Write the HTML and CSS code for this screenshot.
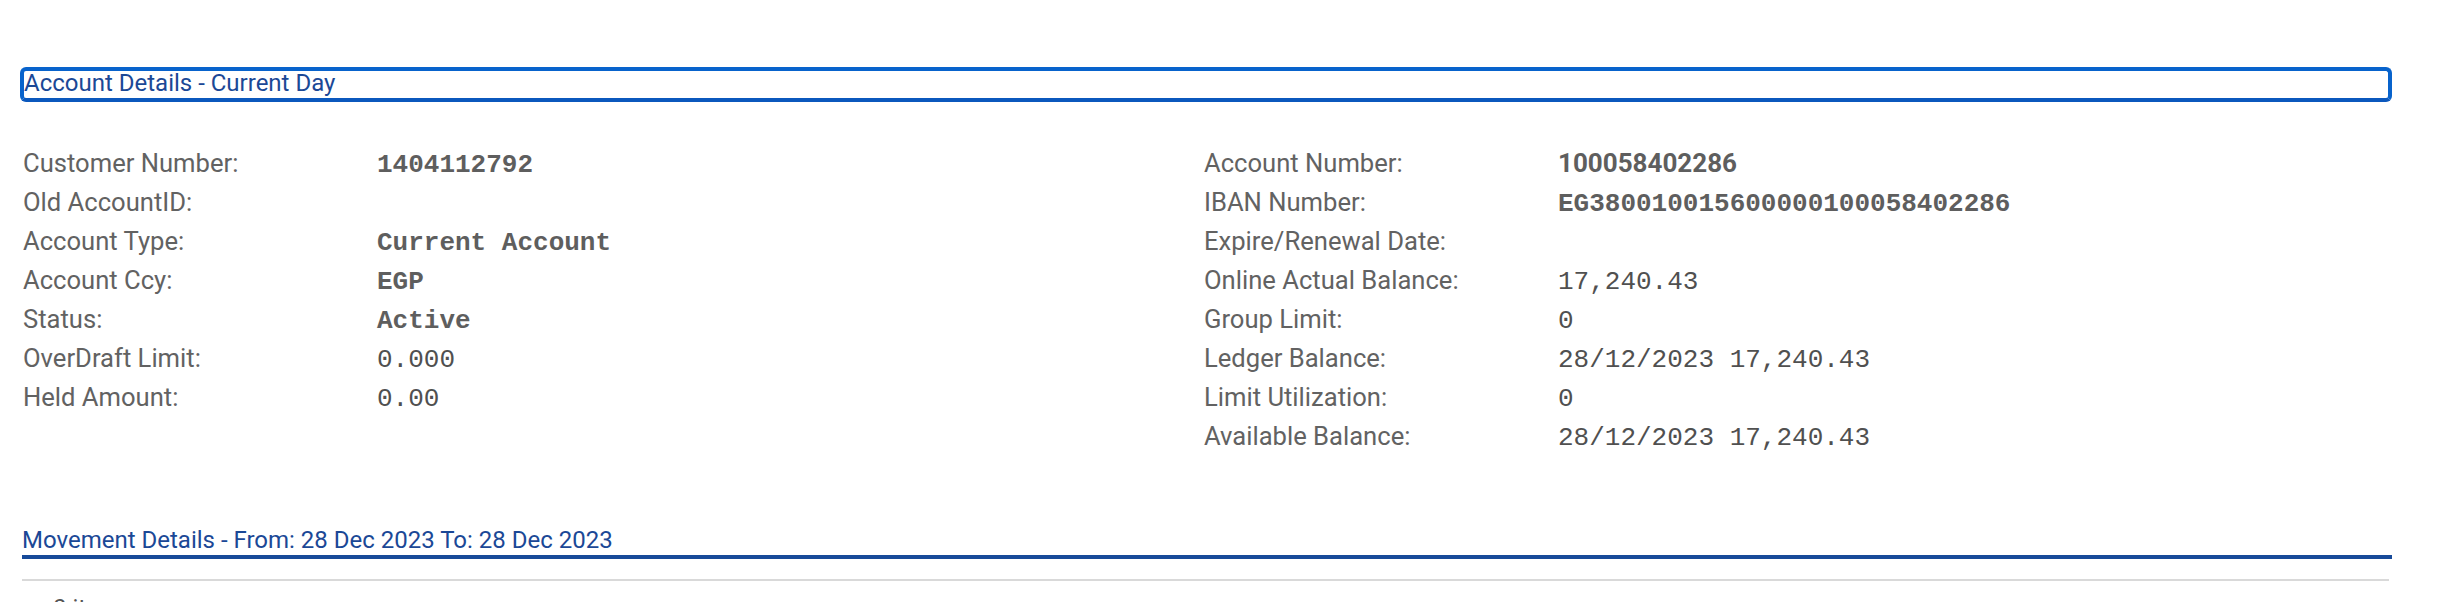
FILE: index.html
```html
<!DOCTYPE html>
<html>
<head>
<meta charset="utf-8">
<link rel="stylesheet" href="styles.css">
</head>
<body>
<div class="page">
  <div class="section-box">Account Details - Current Day</div>

  <div class="details">
    <div class="col">
      <div class="label">Customer Number:</div><div class="val courier">1404112792</div>
      <div class="label">Old AccountID:</div><div class="val"></div>
      <div class="label">Account Type:</div><div class="val courier">Current Account</div>
      <div class="label">Account Ccy:</div><div class="val courier">EGP</div>
      <div class="label">Status:</div><div class="val courier">Active</div>
      <div class="label">OverDraft Limit:</div><div class="val mono">0.000</div>
      <div class="label">Held Amount:</div><div class="val mono">0.00</div>
    </div>
    <div class="col">
      <div class="label">Account Number:</div><div class="val sansbold">100058402286</div>
      <div class="label">IBAN Number:</div><div class="val courier">EG380010015600000100058402286</div>
      <div class="label">Expire/Renewal Date:</div><div class="val"></div>
      <div class="label">Online Actual Balance:</div><div class="val mono">17,240.43</div>
      <div class="label">Group Limit:</div><div class="val mono">0</div>
      <div class="label">Ledger Balance:</div><div class="val mono">28/12/2023 17,240.43</div>
      <div class="label">Limit Utilization:</div><div class="val mono">0</div>
      <div class="label">Available Balance:</div><div class="val mono">28/12/2023 17,240.43</div>
    </div>
  </div>

  <div class="movement-title">Movement Details - From: 28 Dec 2023 To: 28 Dec 2023</div>
  <div class="grid-top"></div>
  <div class="items">0 items</div>
</div>
</body>
</html>
```
FILE: styles.css
```css
html, body {
  margin: 0;
  padding: 0;
  background: #ffffff;
}
body {
  font-family: Roboto, "Liberation Sans", Arial, sans-serif;
  color: #646464;
}
.page {
  padding: 67px 62px 0 20px;
}
.section-box {
  box-sizing: border-box;
  height: 35px;
  border: 4px solid #0863cc;
  border-bottom-color: #0b58bd;
  border-radius: 6px;
  color: #1b4896;
  font-size: 24px;
  line-height: 24px;
  padding: 0;
  white-space: nowrap;
}
.details {
  display: grid;
  grid-template-columns: 1181px 1fr;
  padding: 42px 0 0 3px;
}
.col {
  display: grid;
  grid-template-columns: 354px 1fr;
  grid-auto-rows: 39px;
  align-items: baseline;
}
.label {
  font-size: 25.6px;
  line-height: 39px;
  color: #626262;
}
.val {
  font-size: 26px;
  line-height: 39px;
  color: #5e5e5e;
  white-space: nowrap;
}
.courier {
  font-family: "Courier New", "Liberation Mono", monospace;
  font-weight: bold;
}
.mono {
  font-family: "Liberation Mono", monospace;
  color: #505050;
}
.sansbold {
  font-family: Roboto, "Liberation Sans", sans-serif;
  font-weight: bold;
}
.movement-title {
  margin: 69px 0 0 2px;
  height: 30px;
  line-height: 30px;
  font-size: 24px;
  color: #1b4896;
  border-bottom: 4px solid #174a99;
}
.grid-top {
  margin: 20px 3px 0 2px;
  height: 2px;
  background: #d9d9d9;
}
.items {
  padding: 12px 0 0 33px;
  font-size: 24px;
  line-height: 30px;
  color: #555;
}
```
